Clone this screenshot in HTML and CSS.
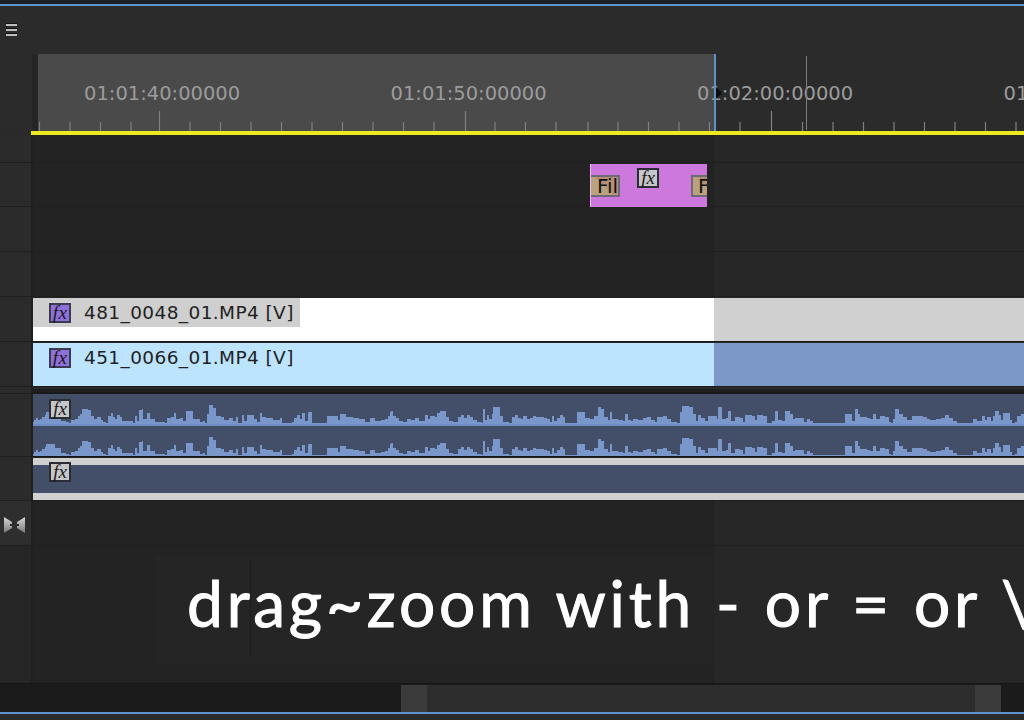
FILE: index.html
```html
<!DOCTYPE html>
<html lang="en">
<head>
<meta charset="UTF-8" />
<title>Timeline</title>
<link rel="stylesheet" href="styles.css">
</head>
<body>
<div class="timeline">
  <div class="edge-top"></div>

  <div class="topbar">
    <div class="menu"><span></span><span></span><span></span></div>
  </div>

  <!-- ruler -->
  <div class="ruler">
    <div class="ruler-labels">
      <span>01:01:40:00000</span>
      <span>01:01:50:00000</span>
      <span>01:02:00:00000</span>
      <span>01:02:10:00000</span>
    </div>
    <svg class="ticks" width="1024" height="20" viewBox="0 0 1024 20">
      <path class="tick" d="M39.5 11V20M70 11V20M100.5 11V20M131 11V20M190 11V20M220.5 11V20M251 11V20M281.5 11V20M312 11V20M342.5 11V20M373 11V20M403.5 11V20M434 11V20M495 11V20M525.5 11V20M556 11V20M588 11V20M618 11V20M648.5 11V20M679 11V20M709.5 11V20M740 11V20M802.5 11V20M833 11V20M863.5 11V20M894 11V20M924.5 11V20M955 11V20M985.5 11V20M1016 11V20"/>
      <path class="tick" d="M159.5 0V20M465.5 0V20M771.5 0V20"/>
    </svg>
    <div class="cursor"></div>
    <div class="playhead"></div>
    <div class="playhead-arrow"></div>
  </div>
  <div class="workarea"></div>

  <!-- tracks -->
  <div class="row row-28"><div class="head"></div><div class="lane"></div></div>

  <div class="row row-44">
    <div class="head"></div>
    <div class="lane">
      <div class="fx-clip">
        <div class="tag tag-left">Fil</div>
        <div class="fx fx-grey">fx</div>
        <div class="tag tag-right">F</div>
      </div>
    </div>
  </div>

  <div class="row row-45"><div class="head"></div><div class="lane"></div></div>
  <div class="row row-45"><div class="head"></div><div class="lane"></div></div>

  <div class="row row-45">
    <div class="head"></div>
    <div class="lane">
      <div class="clip clip-white">
        <div class="clip-name clip-name-grey">
          <div class="fx fx-purple">fx</div>
          <span>481_0048_01.MP4 [V]</span>
        </div>
      </div>
    </div>
  </div>

  <div class="row row-45">
    <div class="head"></div>
    <div class="lane">
      <div class="clip clip-blue">
        <div class="clip-name">
          <div class="fx fx-purple">fx</div>
          <span>451_0066_01.MP4 [V]</span>
        </div>
      </div>
    </div>
  </div>

  <div class="row row-gap"><div class="head"></div><div class="lane lane-dark"></div></div>

  <div class="row row-63">
    <div class="head"></div>
    <div class="lane">
      <div class="audio">
        <div class="fx fx-grey fx-over">fx</div>
        <svg class="wave" width="991" height="22" viewBox="0 0 991 22">
          <path id="wave" transform="matrix(1 0 0 -1 0 22)" d="M0 0V2H1V4H3V6H5V4H7V5H9V7H12V9H13V12H19V12H22V8H28V3H33V2H36V1H38V4H42V5H45V8H47V10H49V15H55V14H58V8H61V5H64V7H68V4H70V2H73V1H75V8H78V11H80V7H82V5H84V9H87V7H89V3H100V1H102V8H104V3H106V14H109V15H110V5H114V11H117V5H122V2H132V1H134V6H138V7H141V11H143V5H147V6H150V3H153V13H158V13H160V5H167V2H170V3H172V1H174V10H176V19H180V16H183V8H188V7H191V4H196V6H200V3H203V7H205V1H209V9H211V3H214V9H219V9H221V5H224V2H227V11H229V7H233V6H240V4H247V6H249V1H259V2H261V6H264V9H267V5H269V11H272V3H275V12H278V12H279V1H292V1H294V8H303V8H305V4H307V10H311V10H313V7H320V6H326V5H332V2H337V6H342V3H348V4H352V5H355V8H357V12H358V13H360V8H363V6H366V3H370V2H374V5H378V4H382V6H386V3H392V9H395V5H397V8H402V7H404V11H407V13H411V13H413V7H416V3H420V2H425V7H428V9H431V6H434V9H437V7H440V4H444V2H449V1H450V15H452V4H454V9H456V5H459V10H460V17H465V17H467V8H470V2H476V1H479V7H482V9H485V6H488V5H490V8H494V5H497V6H500V8H503V7H507V7H511V6H514V5H517V2H519V8H521V3H524V6H527V9H530V7H532V1H543V1H544V12H550V12H552V6H557V5H561V8H565V17H568V15H571V7H575V4H577V12H579V5H585V4H590V3H592V10H595V4H598V3H600V5H605V4H610V6H614V7H618V4H622V2H624V7H630V8H634V5H638V2H644V1H647V12H649V18H656V17H660V10H663V3H665V9H668V6H672V3H675V8H682V8H684V5H685V17H689V5H693V6H695V13H698V3H702V7H707V6H710V2H712V9H719V8H722V4H724V9H730V8H734V1H739V3H742V13H745V4H749V3H752V13H757V10H760V5H762V6H767V6H771V2H774V5H777V3H780V1H810V1H812V10H817V10H819V3H822V15H825V10H827V7H834V6H837V5H840V10H843V5H847V8H852V7H856V2H858V1H860V5H862V15H866V10H870V7H874V4H879V8H890V7H894V5H897V4H903V5H908V6H912V9H916V6H920V3H924V1H939V1H940V5H944V3H949V8H952V4H954V7H958V3H960V8H962V13H966V9H968V4H970V11H975V11H977V4H979V1H982V2H984V8H988V10H991V0Z"/>
        </svg>
        <svg class="wave wave-low" width="991" height="22" viewBox="0 0 991 22">
          <use href="#wave"/>
        </svg>
      </div>
    </div>
  </div>

  <div class="row row-44">
    <div class="head"></div>
    <div class="lane">
      <div class="audio-empty">
        <div class="fx fx-grey fx-over-low">fx</div>
      </div>
    </div>
  </div>

  <div class="row row-45">
    <div class="head head-light">
      <svg class="bowtie" width="21" height="18" viewBox="0 0 21 18">
        <defs>
          <linearGradient id="bowGrad" x1="0" y1="0" x2="0" y2="1">
            <stop offset="0" stop-color="#d8d8d8"/>
            <stop offset="1" stop-color="#777"/>
          </linearGradient>
        </defs>
        <path fill="url(#bowGrad)" d="M0 1L8 6V8H6V10H8V12L0 17ZM21 1V17L13 12V10H15V8H13V6Z"/>
      </svg>
    </div>
    <div class="lane"></div>
  </div>

  <div class="row row-last">
    <div class="head head-dim"></div>
    <div class="lane lane-caption">
      <div class="caption">drag~zoom with - or = or \</div>
    </div>
  </div>

  <!-- scrollbar -->
  <div class="scrollbar">
    <div class="scroll-thumb">
      <div class="scroll-cap"></div>
      <div class="scroll-cap"></div>
    </div>
  </div>
  <div class="edge-bottom"></div>
</div>
</body>
</html>
```

FILE: styles.css
```css
:root {
  --font-ui: "DejaVu Sans", sans-serif;
  --lane-left: #232323;
  --lane-right: #272727;
  --line: #1f1f1f;
  --blue-line: #5b94cf;
  --clip-audio: #434e68;
  --wave: #7a97cc;
  --clip-grey: #d0d0d0;
}

html, body {
  margin: 0; padding: 0;
  background: #000;
}

.timeline {
  position: relative;
  width: 1024px; height: 720px;
  overflow: hidden;
  display: flex; flex-direction: column;
  background: #2a2a2a;
  font-family: var(--font-ui);
}

.edge-top {
  height: 4px; flex: none;
  background: #1c2024;
  border-bottom: 2px solid var(--blue-line);
}

.topbar {
  height: 48px; flex: none;
  background: #2b2b2b;
  padding: 17px 0 0 6px;
  box-sizing: border-box;
}
.menu {
  display: flex; flex-direction: column; gap: 2px;
  width: 11px;
}
.menu span {
  height: 2px;
  background: #bdbdbd;
  border-top: 1px solid #111;
}

/* ruler */
.ruler {
  position: relative;
  height: 77px; flex: none;
  box-sizing: border-box;
  padding-top: 28px;
  background: linear-gradient(90deg, #2b2b2b 32px, #252525 32px, #252525 38px, #4a4a4a 38px, #4a4a4a 714px, #2b2b2b 714px);
}
.ruler-labels {
  display: flex;
  height: 24px;
  margin-bottom: 5px;
  padding-left: 84px;
  color: #9b9b9b;
  font-size: 19.5px; line-height: 24px;
  white-space: nowrap;
}
.ruler-labels span {
  flex: none;
  width: 306.5px;
}
.ticks {
  display: block;
}
.tick {
  stroke: #808080; stroke-width: 1.2; fill: none;
}
.cursor {
  position: absolute; left: 806px; top: 2px; bottom: 1px;
  width: 1px;
  background: #7d7d7d;
}
.playhead {
  position: absolute; left: 714px; top: 0; bottom: 0;
  width: 2px;
  background: var(--blue-line);
}
.playhead-arrow {
  position: absolute; left: 716px; top: 33px;
  border-left: 6px solid #0c0c0c;
  border-top: 6px solid transparent;
  border-bottom: 6px solid transparent;
}
.workarea {
  height: 4px; flex: none;
  margin-left: 31px;
  background: #ece91f;
}

/* tracks */
.row {
  display: flex; flex: none;
  box-sizing: border-box;
}
.row-28 { height: 28px; }
.row-44 { height: 44px; }
.row-45 { height: 45px; }
.row-63 { height: 63px; }
.row-gap { height: 7px; }
.row-last { height: 137px; }

.head {
  width: 33px; flex: none;
  box-sizing: border-box;
  background: #2b2b2b;
  border-right: 2px solid #202020;
  border-bottom: 1px solid var(--line);
}
.head-light { background: #2e2e2e; padding: 15px 0 0 4px; }
.head-dim { background: #262626; border-bottom: none; }
.bowtie { display: block; }

.lane {
  flex: 1; min-width: 0;
  box-sizing: border-box;
  background: linear-gradient(90deg, var(--lane-left) 681px, var(--lane-right) 681px);
  border-bottom: 1px solid var(--line);
}
.lane-dark {
  background: #1f1f1f;
  border-top: 2px solid #2a2a2a;
  border-bottom: 2px solid #191919;
}

/* fx badge */
.fx {
  flex: none;
  box-sizing: border-box;
  width: 22px; height: 20px;
  border: 2px solid #2c2c34;
  font-family: "Liberation Serif", serif;
  font-style: italic;
  font-size: 19px; line-height: 15px;
  text-align: center;
  color: #1a1a1a;
}
.fx-purple { background: #8f6fd9; border-color: #3a3a50; }
.fx-grey { background: #c6c6c6; }
.fx-over {
  position: absolute; left: 16px; top: 5px;
}
.fx-over-low {
  position: absolute; left: 16px; top: -3px;
}

/* nested sequence clip */
.fx-clip {
  position: relative;
  width: 117px; height: 43px;
  margin-left: 557px; margin-top: 1px;
  background: #cc78dc;
  border-left: 1px solid #e9c0ef;
  box-sizing: border-box;
  overflow: hidden;
}
.tag {
  position: absolute; top: 11px;
  box-sizing: border-box;
  height: 22px;
  border: 2px solid #6f6a78;
  background: linear-gradient(45deg, #b9a27c 50%, #b89078 50%);
  color: #111;
  font-size: 20px; line-height: 19px;
}
.tag-left {
  left: -1px; width: 30px;
  padding-left: 7px;
  border-left: none;
}
.tag-right {
  left: 100px; width: 30px;
  padding-left: 5px;
}
.fx-clip .fx {
  position: absolute; left: 46px; top: 4px;
}

/* video clips */
.clip {
  height: 44px;
  margin-top: 1px;
  box-sizing: border-box;
  border-bottom: 1px solid #1a1a1a;
}
.clip-white {
  background: linear-gradient(90deg, #fff 681px, var(--clip-grey) 681px);
}
.clip-blue {
  background: linear-gradient(90deg, #bde4ff 681px, #7c98c9 681px);
}
.clip-name {
  display: flex; align-items: center; gap: 13px;
  width: 267px; height: 29px;
  box-sizing: border-box;
  padding-left: 16px;
  font-size: 18.5px;
  letter-spacing: 0.4px;
  color: #222;
  white-space: nowrap;
}
.clip-name-grey {
  background: #cfcfcf;
}

/* audio clips */
.audio {
  position: relative;
  height: 63px;
  box-sizing: border-box;
  padding-top: 8px;
  background: var(--clip-audio);
  border-bottom: 1px solid #14161c;
}
.wave {
  display: block;
  fill: var(--wave);
  border-bottom: 2px solid #6f8dc4;
}
.wave-low {
  margin-top: 8px;
  border-bottom: none;
  height: 22px;
}
.audio-empty {
  position: relative;
  height: 42px;
  margin-top: 1px;
  box-sizing: border-box;
  background: var(--clip-audio);
  border-top: 7px solid var(--clip-grey);
  border-bottom: 7px solid var(--clip-grey);
}

/* caption */
.lane-caption {
  border-bottom: none;
  padding: 9px 0 0 123px;
}
.caption {
  position: relative;
  box-sizing: border-box;
  width: 559px; height: 110px;
  padding: 6px 0 0 31px;
  background: #252525;
  color: #fff;
  font-family: Lato, sans-serif;
  font-size: 64px; line-height: 84px;
  letter-spacing: 3.8px; word-spacing: 1px;
  -webkit-text-stroke: 1px #fff;
  white-space: nowrap;
}
.caption::before {
  content: "";
  position: absolute; left: 94px; top: 5px; bottom: 8px;
  width: 1px;
  background: #1f1f1f;
}

/* scrollbar */
.scrollbar {
  height: 29px; flex: none;
  box-sizing: border-box;
  background: #1b1b1b;
  padding: 1px 23px 0 401px;
  border-top: 1px solid #161616;
}
.scroll-thumb {
  display: flex; justify-content: space-between;
  height: 100%;
  background: #2d2d2d;
}
.scroll-cap {
  width: 26px;
  background: #3b3b3b;
}
.edge-bottom {
  height: 2px; flex: none;
  background: var(--blue-line);
}
```
